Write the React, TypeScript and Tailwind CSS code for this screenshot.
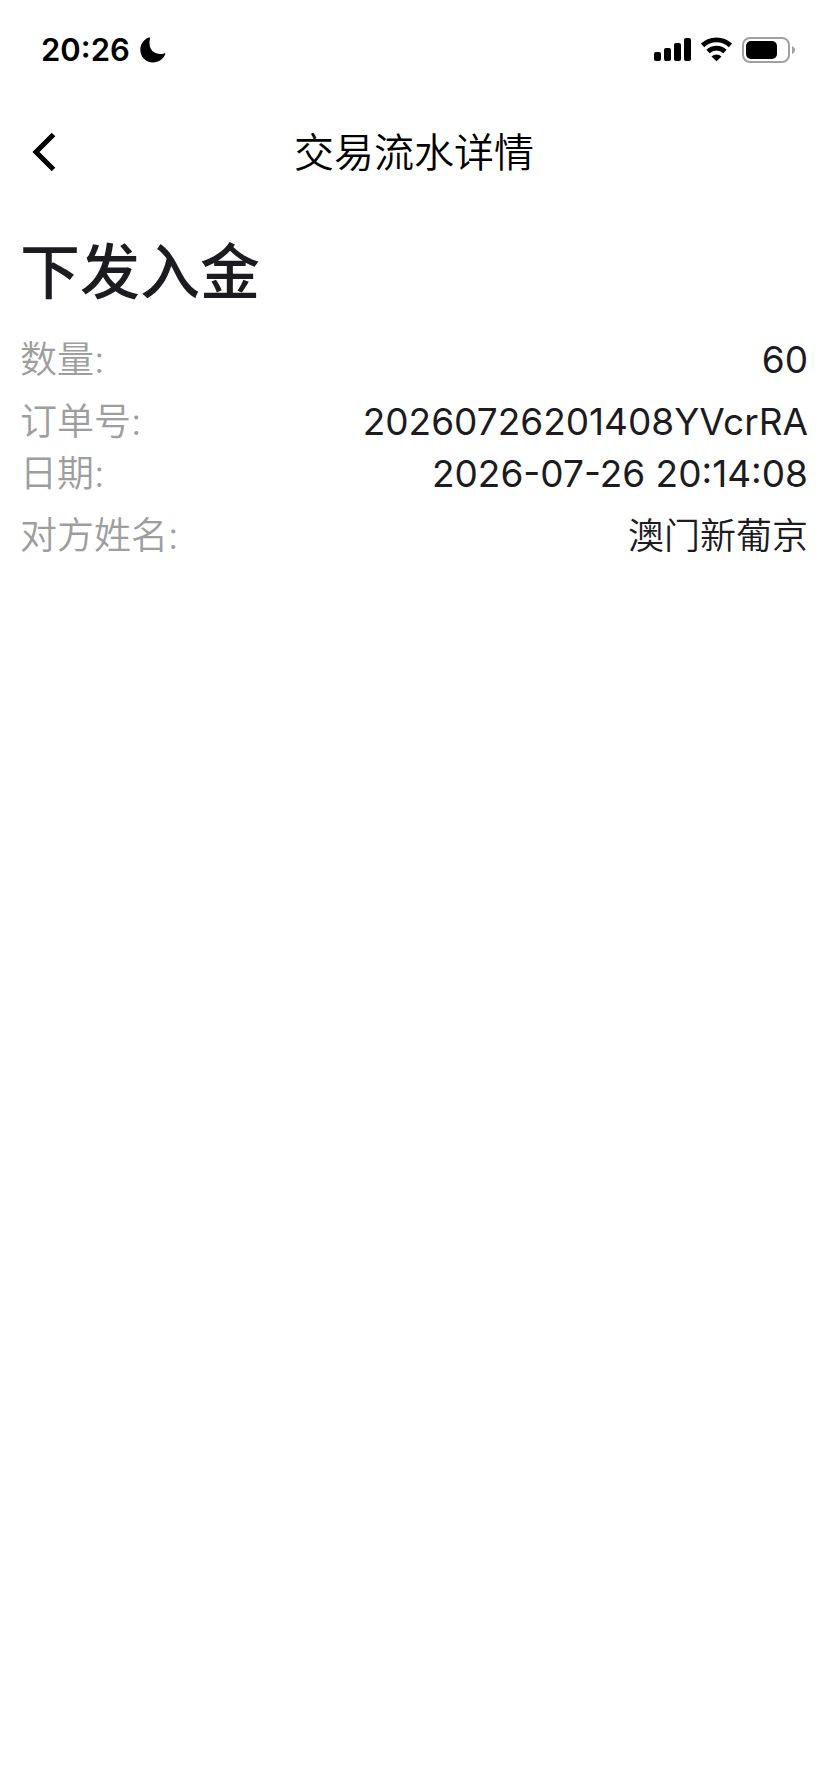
const records = [
  { label: '数量', value: '60', spaced: true },
  { label: '订单号', value: '20260726201408YVcrRA', spaced: false },
  { label: '日期', value: '2026-07-26 20:14:08', spaced: true },
  { label: '对方姓名', value: '澳门新葡京', spaced: false, isName: true },
];

function StatusBar() {
  return (
    <div className="flex h-[100px] items-center justify-between pl-[41px] pr-[33px] text-black">
      <div className="flex items-center gap-[10px]">
        <span className="text-[31px] font-semibold leading-10">20:26</span>
        {/* Focus mode moon */}
        <svg width="26" height="26" viewBox="0 0 26 26" fill="currentColor" aria-hidden="true">
          <path d="M8.8.6C9.700.200 10.300.700 10 1.600 8 9.600 11.700 17 20 17c1.500 0 2.800-.3 4.200-.6.9-.2 1.300.3.900 1.200C23.200 22.300 18.500 25.500 13 25.500 5.800 25.500.300 20 .300 12.800.300 7.200 3.700 2.500 8.800.600Z" />
        </svg>
      </div>
      <div className="flex items-center gap-[10px]">
        <svg width="37" height="26" viewBox="0 0 37 26" fill="currentColor" aria-hidden="true">
          <rect x="0" y="15" width="7" height="9" rx="2" />
          <rect x="10" y="11" width="7" height="13" rx="2" />
          <rect x="20" y="6" width="7" height="18" rx="2" />
          <rect x="30" y="1" width="7" height="23" rx="2" />
        </svg>
        <svg width="31" height="26" viewBox="0 0 31 26" fill="none" stroke="currentColor" strokeWidth="4.8" aria-hidden="true">
          <path d="M1.600 8.400a20 20 0 0 1 27.800 0" />
          <path d="M7 14.500a12.400 12.400 0 0 1 17 0" />
          <path d="m15.500 24.200-5-4.600a7.200 7.200 0 0 1 10 0Z" fill="currentColor" stroke="none" />
        </svg>
        <svg width="53" height="26" viewBox="0 0 53 26" aria-hidden="true">
          <rect x="1" y="1" width="46" height="24" rx="7" fill="none" stroke="#a0a0a0" strokeWidth="2" />
          <rect x="4" y="4" width="31" height="18" rx="5" fill="currentColor" />
          <path d="M50 9c4 1.500 4 6.500 0 8Z" fill="#a0a0a0" />
        </svg>
      </div>
    </div>
  );
}

function App() {
  return (
    <div className="min-h-screen bg-white font-['Inter','Noto_Sans_CJK_SC',sans-serif] text-[#1c1b1f]">
      <StatusBar />

      <header className="grid h-[106px] grid-cols-[88px_1fr_88px] items-center text-black">
        <button type="button" aria-label="返回" className="flex h-full items-center pb-0.5 pl-8">
          <svg width="24" height="40" viewBox="0 0 24 40" fill="none" stroke="currentColor" strokeWidth="5">
            <path d="M21.500 2.500 4 20l17.500 17.500" />
          </svg>
        </button>
        <h1 className="text-center text-[40px] font-[350] leading-[56px]">交易流水详情</h1>
      </header>

      <main className="px-5 pt-[30px]">
        <h2 className="text-[60px] font-medium leading-[72px]">下发入金</h2>
        <dl className="mt-[26px] text-[37px] leading-[52px]">
          {records.map((record) => (
            <div key={record.label} className={record.spaced ? 'flex justify-between mb-[10px]' : 'flex justify-between'}>
              <dt className="font-[350] text-[#9e9e9e]">{record.label}:</dt>
              <dd className={record.isName ? 'text-right text-[36px] font-[350]' : 'text-right font-normal'}>{record.value}</dd>
            </div>
          ))}
        </dl>
      </main>
    </div>
  );
}

export default App;
